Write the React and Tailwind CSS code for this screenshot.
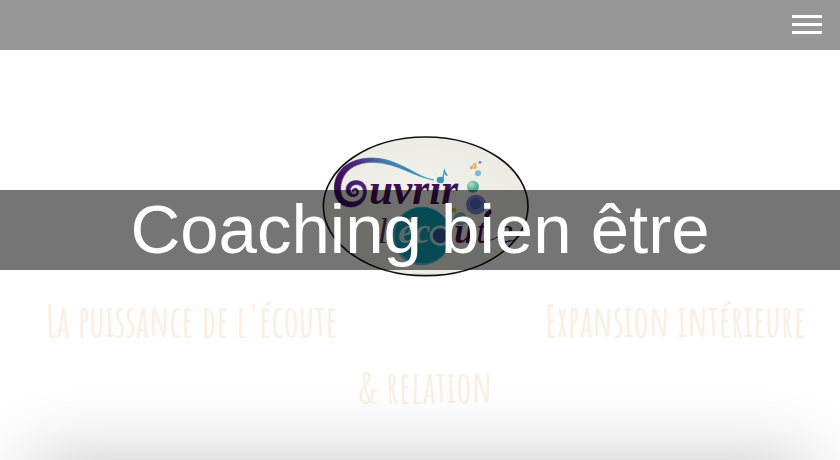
function Logo() {
  return (
    <svg viewBox="0 0 660 450" className="w-[220px] h-[150px]" role="img" aria-label="Ouvrir l'écoute">
      <defs>
        <linearGradient id="swirl" gradientUnits="userSpaceOnUse" x1="90" y1="220" x2="350" y2="110">
          <stop offset="0" stopColor="#3c0a5c" />
          <stop offset="0.3" stopColor="#4a2c80" />
          <stop offset="0.55" stopColor="#4277ae" />
          <stop offset="1" stopColor="#2f9fbd" />
        </linearGradient>
        <radialGradient id="paper">
          <stop offset="0" stopColor="#f3f2ee" />
          <stop offset="1" stopColor="#ecece5" />
        </radialGradient>
        <radialGradient id="green" cx="0.35" cy="0.3">
          <stop offset="0" stopColor="#b4dfc0" />
          <stop offset="1" stopColor="#54ab9c" />
        </radialGradient>
      </defs>
      <ellipse cx="332" cy="229" rx="307" ry="208" fill="url(#paper)" stroke="#111" strokeWidth="5" />

      {/* Swirl of the initial */}
      <path
        d="M357 150 C300 143 250 99 175 97 C115 96 80 128 77 172 C75 204 92 217 114 216 C136 214 147 199 145 182 C143 167 130 161 117 165 C104 170 102 186 112 192 C121 196 128 188 123 182 C118 178 113 182 115 187 C108 184 113 174 122 175 C135 178 134 198 118 200 C96 202 88 180 97 165 C109 147 139 148 150 165 C162 187 150 231 107 231 C73 230 57 204 58 171 C61 115 109 83 175 84 C253 86 307 143 357 150 Z"
        fill="url(#swirl)"
        stroke="url(#swirl)"
        strokeWidth="2"
      />
      <text x="162" y="222" fontSize="130" fontWeight="bold" fontStyle="italic" fontFamily="'Liberation Serif', serif" fill="#3f1052">uvrir</text>

      {/* The first note stands for the dot of the i */}
      <ellipse cx="372" cy="143" rx="16" ry="16" fill="#f1f0eb" />
      <g fill="#3197b5">
        <ellipse cx="376" cy="150" rx="11" ry="10" />
        <path d="M381 148 L388 114 Q390 127 398 135 Q396 139 394 137 Q389 133 389 128 L385 150 Z" />
      </g>
      <g fill="#d8b140">
        <circle cx="469" cy="113" r="5" />
        <circle cx="480" cy="113" r="4" />
        <path d="M471 112 L475 99 L478 99 L474 113 Z M478 103 L484 96 L484 113 L480 113 Z" />
      </g>
      <circle cx="495" cy="97" r="4" fill="#6978c4" />
      <circle cx="489" cy="130" r="9" fill="#7cb9da" />
      <circle cx="474" cy="170" r="18" fill="url(#green)" />
      <circle cx="483" cy="224" r="30" fill="#7688d3" />
      <circle cx="482" cy="222" r="17" fill="#5368bd" />
      <circle cx="417" cy="241" r="7" fill="#d8b140" />
      <circle cx="436" cy="266" r="20" fill="#71c5ad" />

      {/* Blue disc behind the second word */}
      <circle cx="320" cy="318" r="88" fill="#51c7d3" />
      <circle cx="323" cy="316" r="84" fill="#10a2b8" />
      <circle cx="376" cy="317" r="27" fill="#3159a3" stroke="#b9e3e6" strokeWidth="9" />
      <g fontFamily="'Liberation Serif', serif" fontStyle="italic" fontSize="108">
        <text x="188" y="340" fill="#59346b">l'</text>
        <text x="250" y="340" fontWeight="bold" fill="#b9e3e6">éc</text>
        <text x="418" y="340" fontWeight="bold" fill="#3f1052">u</text>
        <text x="484" y="340" fill="#3f1052">t</text>
        <text x="546" y="340" fill="#3f1052">e</text>
      </g>
      <path d="M507 258 Q515 240 528 238 L530 250 Q522 256 518 264 Z" fill="#3f1052" />
      <path d="M500 334 Q525 336 552 318 M583 334 Q606 334 633 294" fill="none" stroke="#3f1052" strokeWidth="3" />
    </svg>
  );
}

function App() {
  return (
    <div className="relative min-h-screen overflow-hidden bg-[#fefefe]">
      {/* Top bar */}
      <header className="flex h-[50px] items-start justify-end bg-[#979797] px-[18px] pt-[15px]">
        <button type="button" aria-label="Menu" className="flex w-[30px] flex-col gap-[5px]">
          <span className="h-[3px] w-full bg-white" />
          <span className="h-[3px] w-full bg-white" />
          <span className="h-[3px] w-full bg-white" />
        </button>
      </header>

      <main className="pt-20 pl-[10px]">
        <div className="flex justify-center">
          <Logo />
        </div>

        {/* Slogans */}
        <div className="pt-2 text-center font-['Amatic_SC','Roboto_Condensed','Liberation_Sans_Narrow','Liberation_Sans',sans-serif] text-[43px] leading-[66px] font-bold text-[#faefe2]">
          <div className="flex justify-between pr-[34px] pl-9">
            <p>La puissance de l'écoute</p>
            <p>Expansion intérieure</p>
          </div>
          <p>&amp; relation</p>
        </div>
      </main>

      {/* Title band laid over the logo */}
      <div className="absolute inset-x-0 top-1/2 flex h-20 -translate-y-1/2 items-center justify-center bg-black/54">
        <h1 className="font-['Liberation_Sans',sans-serif] text-[69px] leading-[80px] whitespace-nowrap text-white">Coaching bien être</h1>
      </div>

      {/* Shadow rising from the bottom edge */}
      <div className="absolute inset-x-8 top-full h-40 shadow-[0_0_70px_rgba(0,0,0,0.22)]" />
    </div>
  );
}

export default App;
